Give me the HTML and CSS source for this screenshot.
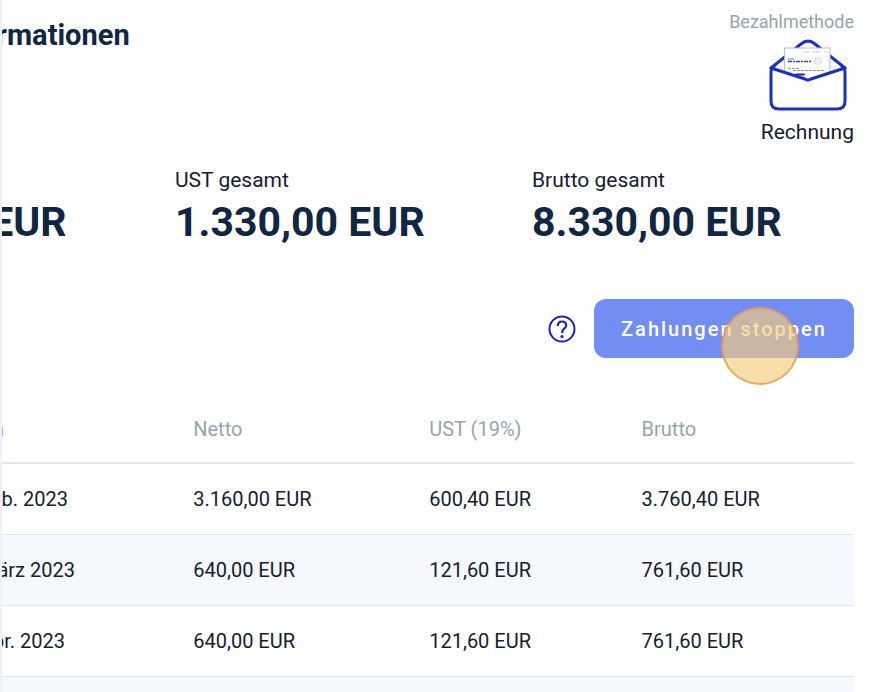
FILE: index.html
```html
<!DOCTYPE html>
<html lang="de">
<head>
<meta charset="utf-8">
<title>Zahlungen</title>
<link rel="stylesheet" href="styles.css">
</head>
<body>
<main class="page">
  <div class="content">
    <header class="head">
      <h1 class="title">ormationen</h1>
      <div class="method">
        <span class="method-label">Bezahlmethode</span>
        <svg class="envelope" width="78" height="72" viewBox="0 0 78 72" fill="none" stroke="#1c2fc4" stroke-width="3" stroke-linejoin="round" stroke-linecap="round" aria-hidden="true">
          <path d="M2 29 32 5Q39-1 46 5L76 29"/>
          <rect x="16" y="9" width="45" height="32" fill="#fff" stroke="#b4bbdc" stroke-width="1"/>
          <g stroke-linecap="butt">
            <path d="M35 13h6M44 13h7M55 13h4" stroke="#b9bdca" stroke-width="1" stroke-dasharray="2 1"/>
            <path d="M19 20h6" stroke="#6670c8" stroke-width="1"/>
            <path d="M19 22.500h23" stroke="#3c468f" stroke-width="1.500" stroke-dasharray="4 1 2 1"/>
            <path d="M19 29.500h12M24 31.500h32" stroke="#8b93bb" stroke-width="1" stroke-dasharray="3 1"/>
            <circle cx="49" cy="22" r="3.500" fill="#f0f1f5" stroke="#d9dce5" stroke-width="1"/>
          </g>
          <path d="M4 28 36 40Q39 42 42 40L74 28V71H4Z" fill="#fff" stroke="none"/>
          <path d="M27 35.500h8" stroke="#222c7c" stroke-width="2"/>
          <path d="M2 29 36 40Q39 42 42 40L76 29"/>
          <path d="M5 27.500Q2 29 2 33V62Q2 70 10 70H68Q76 70 76 62V33Q76 29 73 27.500"/>
        </svg>
        <span class="method-name">Rechnung</span>
      </div>
    </header>

    <section class="totals">
      <div class="total">
        <span class="total-label">&nbsp;</span>
        <strong class="total-value">&nbsp;EUR</strong>
      </div>
      <div class="total">
        <span class="total-label">UST gesamt</span>
        <strong class="total-value">1.330,00 EUR</strong>
      </div>
      <div class="total">
        <span class="total-label">Brutto gesamt</span>
        <strong class="total-value">8.330,00 EUR</strong>
      </div>
    </section>

    <div class="actions">
      <button class="help" type="button" aria-label="Hilfe">
        <svg width="28" height="28" viewBox="0 0 28 28" fill="none" stroke="#1c22b4" stroke-width="2" aria-hidden="true">
          <circle cx="14" cy="14" r="12.500"/>
          <path d="M9.800 11Q9.800 6.500 14 6.500T18.200 10.500C18.200 13.500 14 13.500 14 18" stroke-width="2.200"/>
          <circle cx="14" cy="21.500" r="1.600" fill="#1c22b4" stroke="none"/>
        </svg>
      </button>
      <button class="stop" type="button">Zahlungen stoppen<span class="pointer"></span></button>
    </div>

    <table class="payments">
      <colgroup><col class="c-date"><col class="c-net"><col class="c-tax"><col class="c-gross"></colgroup>
      <thead>
        <tr><th>An</th><th>Netto</th><th>UST (19%)</th><th>Brutto</th></tr>
      </thead>
      <tbody>
        <tr><td>Feb. 2023</td><td>3.160,00 EUR</td><td>600,40 EUR</td><td>3.760,40 EUR</td></tr>
        <tr><td>März 2023</td><td>640,00 EUR</td><td>121,60 EUR</td><td>761,60 EUR</td></tr>
        <tr><td>Apr. 2023</td><td>640,00 EUR</td><td>121,60 EUR</td><td>761,60 EUR</td></tr>
        <tr><td></td><td></td><td></td><td></td></tr>
      </tbody>
    </table>
  </div>
</main>
</body>
</html>
```
FILE: styles.css
```css
* { box-sizing: border-box; }

html, body { height: 100%; }

body {
  margin: 0;
  overflow: hidden;
  background: #fff;
  color: #14202f;
  font: 20px/24px Roboto, "Liberation Sans", sans-serif;
}

.page {
  height: 100%;
  overflow: hidden;
  border-left: 2px solid #f0f0f8;
  padding-right: 34px;
}

.content { margin-left: -22px; }

.head {
  display: flex;
  justify-content: space-between;
  align-items: flex-start;
  padding-top: 10px;
}

.title {
  margin: 8px 0 0;
  font-size: 29px;
  line-height: 34px;
  font-weight: 700;
  color: #0f2742;
}

.method {
  display: flex;
  flex-direction: column;
  align-items: flex-end;
}

.method-label { font-size: 18px; color: #95a5ac; }

.method-name, .total-label { font-size: 21px; }

.envelope { margin: 5px 7px 9px 0; }

.totals {
  display: grid;
  grid-template-columns: 195fr 357fr 322fr;
  padding-top: 24px;
}

.total {
  display: flex;
  flex-direction: column;
  white-space: nowrap;
}

.total-value {
  font-size: 41px;
  line-height: 60px;
  font-weight: 700;
  color: #0f2742;
}

.actions {
  display: flex;
  justify-content: flex-end;
  align-items: center;
  gap: 18px;
  padding-top: 47px;
}

.help {
  display: flex;
  padding: 0;
  border: 0;
  background: none;
}

.stop {
  position: relative;
  width: 260px;
  height: 59px;
  padding: 0;
  border: 0;
  border-radius: 12px;
  background: #728df3;
  color: #fff;
  font: 500 20px/24px Roboto, "Liberation Sans", sans-serif;
  letter-spacing: 2px;
  white-space: nowrap;
}

.pointer {
  position: absolute;
  top: 8px;
  left: 127px;
  width: 78px;
  height: 78px;
  border: 2px solid rgba(238, 140, 70, 0.7);
  border-radius: 50%;
  background: rgba(245, 205, 125, 0.66);
}

.payments {
  width: 100%;
  margin-top: 35px;
  table-layout: fixed;
  border-collapse: separate;
  border-spacing: 0;
}

.c-date { width: 24.400%; }
.c-net { width: 27%; }
.c-tax { width: 24.300%; }

.payments th, .payments td {
  height: 71px;
  padding: 0;
  border-bottom: 1px solid #e0e4e9;
  text-align: left;
  white-space: nowrap;
}

.payments th {
  padding-top: 2px;
  border-bottom: 2px solid #e2e4e7;
  font-weight: 400;
  color: #95a5ac;
}

.payments tbody tr:nth-child(even) { background: #f5f8fd; }
```
